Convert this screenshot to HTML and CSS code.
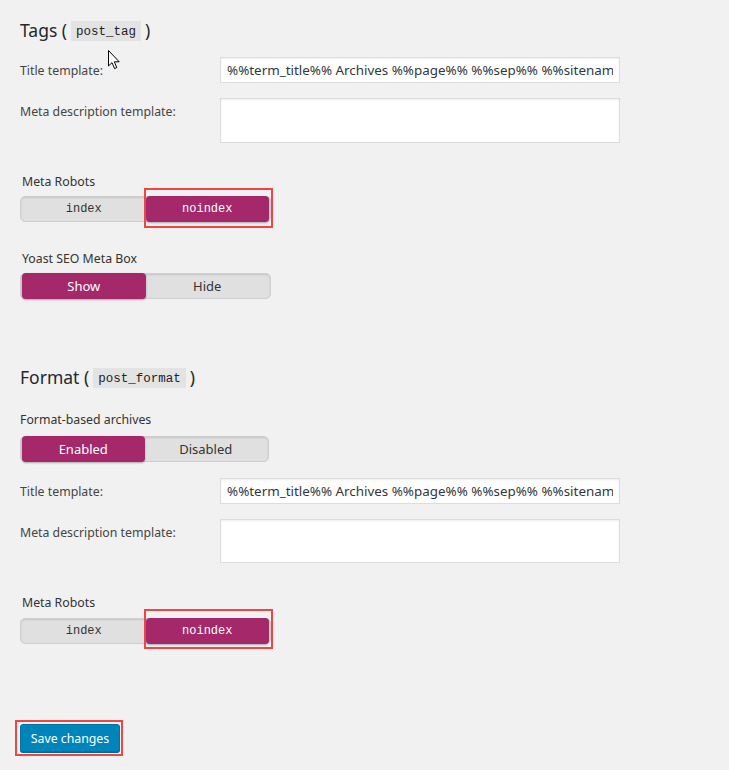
FILE: index.html
```html
<!DOCTYPE html>
<html lang="en">
<head>
  <meta charset="UTF-8" />
  <title>Taxonomies - Yoast SEO</title>
  <link rel="stylesheet" href="styles.css">
</head>
<body>
  <div class="wrap">
    <h2 class="tax-title">Tags ( <code>post_tag</code> )</h2>

    <div class="field-row first">
      <label class="field-label">Title template:</label>
      <input class="field-input" type="text" value="%%term_title%% Archives %%page%% %%sep%% %%sitename%%" />
    </div>
    <div class="field-row">
      <label class="field-label">Meta description template:</label>
      <textarea class="field-area"></textarea>
    </div>

    <div class="switch-group robots">
      <div class="switch-label">Meta Robots</div>
      <div class="switch mono">
        <span class="switch-opt">index</span>
        <span class="switch-opt active">noindex<span class="marker"></span></span>
      </div>
    </div>

    <div class="switch-group metabox">
      <div class="switch-label">Yoast SEO Meta Box</div>
      <div class="switch">
        <span class="switch-opt active">Show</span>
        <span class="switch-opt">Hide</span>
      </div>
    </div>

    <h2 class="tax-title format">Format ( <code>post_format</code> )</h2>

    <div class="switch-group archives">
      <div class="switch-label">Format-based archives</div>
      <div class="switch narrow">
        <span class="switch-opt active">Enabled</span>
        <span class="switch-opt">Disabled</span>
      </div>
    </div>

    <div class="field-row first-b">
      <label class="field-label">Title template:</label>
      <input class="field-input" type="text" value="%%term_title%% Archives %%page%% %%sep%% %%sitename%%" />
    </div>
    <div class="field-row">
      <label class="field-label">Meta description template:</label>
      <textarea class="field-area short"></textarea>
    </div>

    <div class="switch-group robots-b">
      <div class="switch-label">Meta Robots</div>
      <div class="switch mono">
        <span class="switch-opt">index</span>
        <span class="switch-opt active">noindex<span class="marker low"></span></span>
      </div>
    </div>

    <div class="submit">
      <button class="button-primary">Save changes<span class="marker wide"></span></button>
    </div>
  </div>

  <svg class="cursor" width="13" height="21" viewBox="0 0 13 21">
    <path d="M0.5 0.5 L0.5 16 L4 12.6 L6.6 18.6 L8.8 17.6 L6.3 11.8 L11.2 11.8 Z" fill="#fff" stroke="#000" stroke-width="1" stroke-linejoin="miter"/>
  </svg>
</body>
</html>
```

FILE: styles.css
```css
* {
  box-sizing: border-box;
}

body {
  margin: 0;
  background: #f1f1f1;
  color: #444;
  font-family: "Noto Sans", "Open Sans", sans-serif;
  font-size: 12.3px;
  position: relative;
  height: 770px;
  overflow: hidden;
}

.wrap {
  padding: 18px 0 0 20px;
}

.tax-title {
  display: flex;
  align-items: center;
  gap: 4px;
  height: 24px;
  margin: 0;
  font-size: 17.5px;
  line-height: 24px;
  font-weight: 400;
  color: #23282d;
}

.tax-title code {
  font-family: "Liberation Mono", "DejaVu Sans Mono", monospace;
  font-size: 12.5px;
  line-height: 20px;
  height: 20px;
  margin-top: 1px;
  background: #e3e3e3;
  padding: 1px 5px 0;
  color: #1d2125;
}

.tax-title.format {
  margin-top: 66px;
}

.field-row {
  display: grid;
  grid-template-columns: 200px 400px;
  align-items: start;
  margin-top: 15px;
}

.field-row.first {
  margin-top: 15px;
}

.field-row.first-b {
  margin-top: 16px;
}

.field-label {
  padding-top: 5px;
  line-height: 18px;
  color: #444;
}

.field-input {
  width: 400px;
  height: 26px;
  margin: 0;
  padding: 0 6px;
  border: 1px solid #ddd;
  box-shadow: inset 0 1px 2px rgba(0, 0, 0, 0.07);
  background: #fff;
  color: #32373c;
  font-family: "Noto Sans", "Open Sans", sans-serif;
  font-size: 13.4px;
}

.field-area {
  display: block;
  width: 400px;
  height: 45px;
  margin: 0;
  border: 1px solid #ddd;
  box-shadow: inset 0 1px 2px rgba(0, 0, 0, 0.07);
  background: #fff;
  resize: none;
}

.field-area.short {
  height: 44px;
}

.switch-group {
  margin-top: 30px;
}

.switch-group.metabox {
  margin-top: 28px;
}

.switch-group.archives {
  margin-top: 22px;
}

.switch-group.robots-b {
  margin-top: 31px;
}

.switch-label {
  line-height: 18px;
  padding-left: 2px;
  color: #333;
  font-weight: 400;
  margin-bottom: 5px;
}

.archives .switch-label {
  padding-left: 0;
  margin-bottom: 7px;
}

.robots-b .switch-label {
  margin-bottom: 6px;
}

.switch {
  display: flex;
  width: 251px;
  height: 26px;
  padding: 0 1px;
  background: #e0e0e0;
  border: 1px solid #cfcfcf;
  border-radius: 5px;
  box-shadow: inset 0 1px 2px rgba(0, 0, 0, 0.12);
}

.switch.narrow {
  width: 249px;
}

.switch-opt {
  position: relative;
  flex: 1;
  display: flex;
  align-items: center;
  justify-content: center;
  color: #333;
  font-size: 13px;
  border-radius: 4px;
}

.switch.mono .switch-opt {
  font-family: "Liberation Mono", "DejaVu Sans Mono", monospace;
  font-size: 12px;
}

.switch-opt.active {
  margin: -1px 0;
  background: #a4286a;
  color: #fff;
  box-shadow: 0 1px 2px rgba(0, 0, 0, 0.3);
}

.marker {
  position: absolute;
  top: -8px;
  bottom: -6px;
  left: -2px;
  right: -4px;
  border: 2px solid #ef4546;
  pointer-events: none;
}

.marker.low {
  top: -9px;
  bottom: -5px;
}

.submit {
  margin-top: 80px;
}

.button-primary {
  position: relative;
  width: 100px;
  height: 28px;
  padding: 0;
  background: #0085ba;
  border: 1px solid #0073aa;
  border-radius: 3px;
  box-shadow: 0 1px 0 #006799;
  color: #fff;
  font-family: "Noto Sans", "Open Sans", sans-serif;
  font-size: 12.3px;
  cursor: pointer;
}

.marker.wide {
  top: -5px;
  bottom: -5px;
  left: -6px;
  right: -4px;
}

.cursor {
  position: absolute;
  left: 108px;
  top: 50px;
}
```
